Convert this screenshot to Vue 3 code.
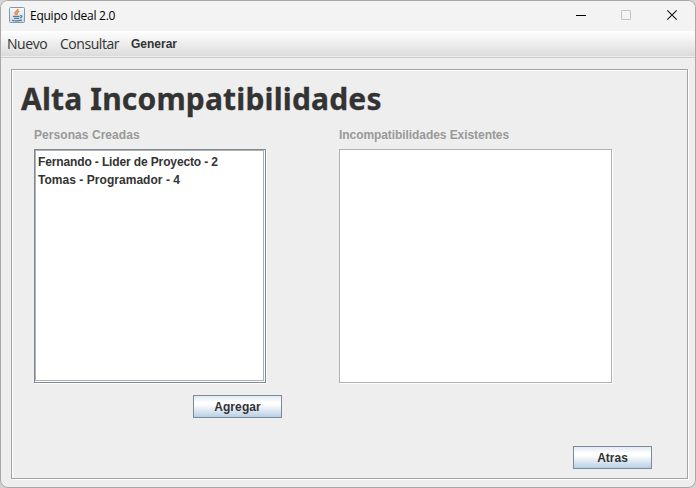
<script setup>
const people = [
  { text: 'Fernando - Lider de Proyecto - 2', spacing: 'tight' },
  { text: 'Tomas - Programador - 4', spacing: 'wide' },
]
</script>

<template>
  <div class="desktop">
    <div class="window">
      <header class="titlebar">
        <svg class="logo" viewBox="0 0 16 16" width="16" height="16">
          <defs>
            <linearGradient id="tile" x1="0" y1="0" x2="0" y2="1">
              <stop offset="0" stop-color="#f8fafb" />
              <stop offset="1" stop-color="#cbd8e2" />
            </linearGradient>
          </defs>
          <rect x=".5" y=".5" width="15" height="15" rx="1" fill="url(#tile)" stroke="#7d9ab0" />
          <path d="M9 2C9 4 5.4 4.6 6 6.2c.3.7.9.9 1.1 1.7M10.2 4.2C7.6 5.3 7.6 6 8.5 7.6" fill="none" stroke="#ee8336" stroke-width="1.5" />
          <path d="M4 9.4h6.5M5 11.4h5M3 13.3c2.5.6 7 .6 10-.2M11 8.7c2.8-.5 2.4 1.8-.2 2.2" fill="none" stroke="#537a9a" stroke-width="1.1" />
        </svg>
        <span class="caption">Equipo Ideal 2.0</span>
        <svg class="controls" width="104" height="12" viewBox="0 0 104 12" fill="none">
          <path d="M0 6.5h10" stroke="#000" />
          <rect x="45.5" y="1.5" width="9" height="9" rx=".6" stroke="#c2c2c2" />
          <path d="M91.3 1.3l9.4 9.4M100.7 1.3l-9.4 9.4" stroke="#111" stroke-width="1.1" />
        </svg>
      </header>
      <nav class="menubar">
        <span class="m1">Nuevo</span>
        <span class="m2">Consultar</span>
        <span class="m3">Generar</span>
      </nav>
      <main class="panel">
        <h1>Alta Incompatibilidades</h1>
        <div class="columns">
          <section class="left">
            <h2 class="created">Personas Creadas</h2>
            <div class="focus">
              <ul class="list">
                <li v-for="p in people" :key="p.text" :class="p.spacing">{{ p.text }}</li>
              </ul>
            </div>
            <button class="add">Agregar</button>
          </section>
          <section class="right">
            <h2 class="existing">Incompatibilidades Existentes</h2>
            <div class="empty"></div>
          </section>
        </div>
        <footer><button class="back">Atras</button></footer>
      </main>
    </div>
  </div>
</template>

<style>
body { margin: 0; overflow: hidden; }
</style>

<style scoped>
* { box-sizing: border-box; }
.desktop { width: 696px; height: 488px; background: #d4d4d4; }
.window {
  width: 696px; height: 488px; overflow: hidden;
  border: 1px solid #a9a9a9; border-radius: 8px; background: #eee;
  font: bold 12px/18px "Liberation Sans", sans-serif; color: #333;
}
.titlebar { height: 30px; display: flex; align-items: center; background: #f3f3f3; padding: 0 15px 0 8px; }
.logo { flex: none; margin-top: -2px; }
.caption { font: 12px/16px "Open Sans", sans-serif; color: #000; margin-left: 5px; letter-spacing: -0.25px; }
.controls { margin-left: auto; margin-top: -2px; }
.menubar {
  height: 27px; display: flex; align-items: center; padding-left: 6px;
  background: linear-gradient(#fff, #dadada); border-bottom: 1px solid #ccc;
  box-shadow: inset 0 -1px #eee;
  white-space: nowrap;
}
.m1, .m2 { font: 14px/20px "Open Sans", sans-serif; letter-spacing: -0.45px; }
.m1 { width: 53px; }
.m2 { width: 71px; }
.panel {
  width: 677px; height: 410px; margin: 11px 0 0 10px;
  border: 1px solid #a3a3a3; box-shadow: inset 1px 1px #fff, 1px 1px #fff;
  display: flex; flex-direction: column;
}
h1 { margin: 8px 0 0 9px; height: 42px; font: bold 30px/41px "Noto Sans", sans-serif; letter-spacing: 0.17px; -webkit-text-stroke: 0.3px #333; white-space: nowrap; }
.columns { display: flex; margin-top: 6px; padding-left: 22px; }
.left { width: 305px; display: flex; flex-direction: column; align-items: flex-start; }
h2 { margin: 0; height: 23px; font: bold 12px/18px "Liberation Sans", sans-serif; color: #999; }
.created { letter-spacing: 0.06px; }
.existing { letter-spacing: -0.07px; }
.focus { width: 232px; height: 234px; border: 1px solid #7a8a99; background: #fff; padding: 0 1px 1px 0; box-shadow: 1px 1px #fff; }
.list { list-style: none; height: 231px; margin: 0; padding: 2px; border: 1px solid #b0b0b0; }
.list li { height: 18px; line-height: 18px; white-space: nowrap; }
.tight { letter-spacing: -0.13px; }
.wide { letter-spacing: 0.04px; }
.empty { width: 273px; height: 234px; border: 1px solid #b0b0b0; background: #fff; box-shadow: 1px 1px #fff; }
button {
  height: 23px; padding: 1px 0 0; border: 1px solid #7a8a99; border-radius: 0;
  background: linear-gradient(#e0eaf3, #fff 30%, #fff 40%, #b8cfe5);
  color: #333; font: bold 12px/20px "Liberation Sans", sans-serif;
}
.add { width: 89px; margin: 12px 0 0 159px; letter-spacing: 0.1px; }
.back { width: 79px; }
footer { display: flex; justify-content: flex-end; padding: 28px 35px 0 0; }
</style>
